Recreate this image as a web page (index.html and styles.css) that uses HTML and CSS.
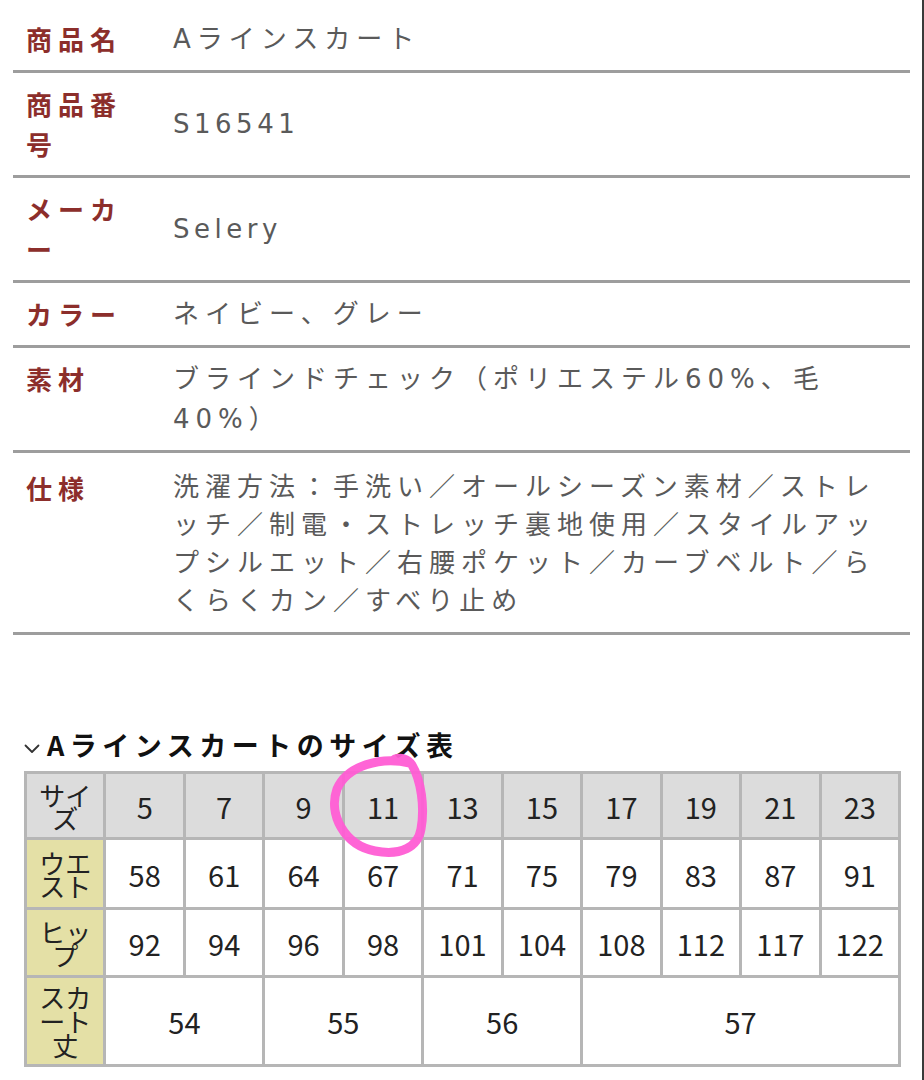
FILE: index.html
```html
<!DOCTYPE html>
<html lang="ja">
<head>
<meta charset="utf-8">
<title>Aラインスカート</title>
<link rel="stylesheet" href="styles.css">
</head>
<body>
<div class="page">
  <table class="spec">
    <tr><th>商品名</th><td>Aラインスカート</td></tr>
    <tr><th>商品番号</th><td><span class="latin">S16541</span></td></tr>
    <tr><th>メーカー</th><td><span class="latin">Selery</span></td></tr>
    <tr><th>カラー</th><td>ネイビー、グレー</td></tr>
    <tr><th>素材</th><td>ブラインドチェック（ポリエステル60%、毛40%）</td></tr>
    <tr class="last"><th>仕様</th><td>洗濯方法：手洗い／オールシーズン素材／ストレッチ／制電・ストレッチ裏地使用／スタイルアップシルエット／右腰ポケット／カーブベルト／らくらくカン／すべり止め</td></tr>
  </table>

  <h2 class="size-title"><svg class="chev" width="16" height="10" viewBox="0 0 16 10"><polyline points="1.5,1.5 8,8 14.5,1.5" fill="none" stroke="#333" stroke-width="1.8" stroke-linecap="round" stroke-linejoin="round"/></svg>Aラインスカートのサイズ表</h2>

  <div class="size-wrap">
    <table class="size">
      <tr class="head">
        <th>サイズ</th><td>5</td><td>7</td><td>9</td><td>11</td><td>13</td><td>15</td><td>17</td><td>19</td><td>21</td><td>23</td>
      </tr>
      <tr class="r1">
        <th>ウエスト</th><td>58</td><td>61</td><td>64</td><td>67</td><td>71</td><td>75</td><td>79</td><td>83</td><td>87</td><td>91</td>
      </tr>
      <tr class="r2">
        <th>ヒップ</th><td>92</td><td>94</td><td>96</td><td>98</td><td>101</td><td>104</td><td>108</td><td>112</td><td>117</td><td>122</td>
      </tr>
      <tr class="r3">
        <th class="tall">スカート丈</th><td colspan="2">54</td><td colspan="2">55</td><td colspan="2">56</td><td colspan="4">57</td>
      </tr>
    </table>
    <svg class="circle" width="924" height="300" viewBox="0 740 924 300">
      <path d="M410 764 C380 757 347 767 337 790 C328 815 344 846 375 852 C401 857 418 848 421 830 C425 808 421 781 412 766 C408 760 401 758 395 760" fill="none" stroke="#ff5dd4" stroke-width="9" stroke-linecap="round" stroke-linejoin="round" opacity="0.95"/>
    </svg>
  </div>
</div>
</body>
</html>
```
FILE: styles.css
```css
html, body {
  margin: 0;
  padding: 0;
  background: #fff;
}
body {
  font-family: "DejaVu Sans", "Noto Sans CJK JP", sans-serif;
}
.page {
  width: 924px;
  min-height: 1080px;
  box-sizing: border-box;
  border-right: 2px solid #3a3a3a;
  padding-top: 8px;
  overflow: hidden;
}
.spec {
  border-collapse: collapse;
  margin-left: 13px;
  width: 897px;
  table-layout: fixed;
}
.spec tr {
  border-bottom: 3px solid #9d9d9d;
}
.spec th {
  width: 122px;
  padding: 11px 12px 11px 13px;
  text-align: left;
  vertical-align: top;
  font-family: "Noto Sans CJK JP", sans-serif;
  font-weight: bold;
  font-size: 26px;
  line-height: 40px;
  letter-spacing: 6px;
  color: #8c2e2b;
}
.spec td {
  padding: 11px 14px 11px 13px;
  vertical-align: middle;
  font-family: "DejaVu Sans", "Noto Sans CJK JP", sans-serif;
  font-size: 26px;
  line-height: 40px;
  letter-spacing: 6px;
  color: #5a5a5a;
  line-break: loose;
}
.spec .latin {
  letter-spacing: 4.5px;
}
.spec tr.last th { padding-top: 15px; }
.spec tr.last td { padding-top: 15px; padding-bottom: 12px; line-height: 38px; }

.size-title {
  margin: 92px 0 8px 24px;
  display: flex;
  align-items: center;
  font-family: "Noto Sans CJK JP", sans-serif;
  font-weight: bold;
  font-size: 27px;
  line-height: 36px;
  letter-spacing: 5.5px;
  color: #111;
}
.chev {
  margin-right: 7px;
  margin-top: 8px;
}
.size-wrap {
  position: relative;
}
.size {
  border-collapse: collapse;
  table-layout: fixed;
  margin-left: 24px;
  width: 877px;
  font-family: "Noto Sans CJK JP", sans-serif;
}
.size th, .size td {
  border: 3px solid #b6b6b6;
  text-align: center;
  vertical-align: middle;
  padding: 0;
}
.size td {
  font-size: 29px;
  color: #222;
  background: #fff;
}
.size th {
  font-weight: normal;
  font-size: 26px;
  line-height: 23px;
  color: #222;
  background: #e4e0a6;
  padding: 0 8px;
}
.size tr.head th, .size tr.head td {
  background: #dcdcdc;
}
.size tr.head { height: 66px; }
.size tr.r1 { height: 70px; }
.size tr.r2 { height: 68px; }
.size tr.r3 { height: 89px; }
.size th.tall { line-height: 24px; }
.circle {
  position: absolute;
  left: 0;
  top: -32px;
  pointer-events: none;
}
```
